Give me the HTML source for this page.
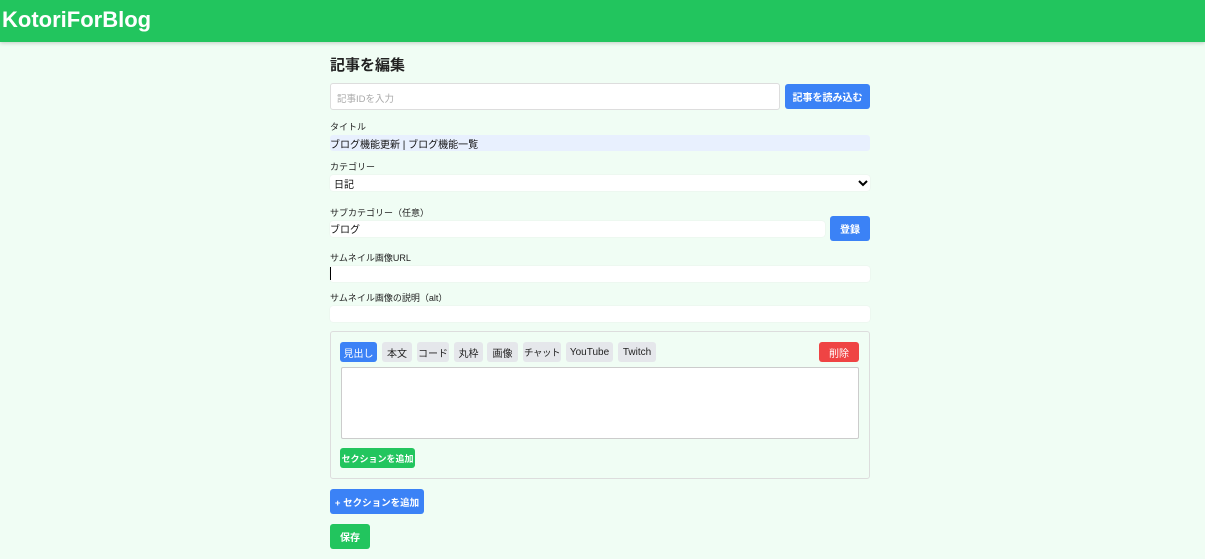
<!DOCTYPE html>
<html><head><meta charset="utf-8"><style>
*{box-sizing:border-box;margin:0;padding:0;white-space:nowrap}
body{width:1205px;height:559px;background:#f0fdf4;font-family:"Liberation Sans","Noto Sans CJK JP",sans-serif;position:relative;overflow:hidden;color:#111}
.a{position:absolute}
.hdr{left:0;top:0;width:1205px;height:42px;background:#22c55e;box-shadow:0 1px 4px rgba(0,0,0,.2)}
.hdr span{position:absolute;left:2px;top:7px;color:#fff;font-weight:bold;font-size:22px}
.lbl{font-size:9px;color:#222;left:330px}
.in{background:#fff;border-radius:3px;left:330px;width:540px;box-shadow:0 0 1px #ddd}
.btn{color:#fff;font-size:10px;font-weight:bold;border-radius:3px;display:flex;align-items:center;justify-content:center}
.tb{top:342px;height:20px;background:#e5e7eb;border-radius:3px;font-size:10px;display:flex;align-items:center;justify-content:center;color:#222}
</style></head><body>
<div class="a hdr"><span>KotoriForBlog</span></div>
<div class="a" style="left:330px;top:54px;font-size:15px;font-weight:bold;color:#222">記事を編集</div>
<div class="a" style="left:330px;top:83px;width:450px;height:27px;background:#fff;border:1px solid #ddd;border-radius:3px;font-size:9.5px;color:#aaa;padding:7px 0 0 6px">記事IDを入力</div>
<div class="a btn" style="left:785px;top:84px;width:85px;height:25px;background:#3b82f6">記事を読み込む</div>
<div class="a lbl" style="top:120px">タイトル</div>
<div class="a" style="left:330px;top:135px;width:540px;height:16px;background:#e8f0fe;border-radius:3px;font-size:10px;padding-top:1px">ブログ機能更新 | ブログ機能一覧</div>
<div class="a lbl" style="top:160px">カテゴリー</div>
<div class="a in" style="top:175px;height:16px;font-size:10px;padding:1px 0 0 4px">日記<svg style="position:absolute;right:2px;top:4px" width="10" height="8" viewBox="0 0 10 8"><path d="M1 2l4 4 4-4" stroke="#000" stroke-width="2" fill="none"/></svg></div>
<div class="a lbl" style="top:206px">サブカテゴリー（任意）</div>
<div class="a in" style="top:221px;width:495px;height:16px;font-size:10px;padding-top:0px">ブログ</div>
<div class="a btn" style="left:830px;top:216px;width:40px;height:25px;background:#3b82f6">登録</div>
<div class="a lbl" style="top:251px">サムネイル画像URL</div>
<div class="a in" style="top:266px;height:16px"><div style="position:absolute;left:0;top:1px;width:1px;height:13px;background:#000"></div></div>
<div class="a lbl" style="top:291px">サムネイル画像の説明（alt）</div>
<div class="a in" style="top:306px;height:16px"></div>
<div class="a" style="left:330px;top:331px;width:540px;height:148px;border:1px solid #ddd;border-radius:3px"></div>
<div class="a tb" style="left:340px;width:37px;background:#3b82f6;color:#fff">見出し</div>
<div class="a tb" style="left:382px;width:30px">本文</div>
<div class="a tb" style="left:417px;width:32px">コード</div>
<div class="a tb" style="left:454px;width:29px">丸枠</div>
<div class="a tb" style="left:487px;width:31px">画像</div>
<div class="a tb" style="left:523px;width:38px;font-size:9.5px;letter-spacing:-0.5px">チャット</div>
<div class="a tb" style="left:566px;width:47px">YouTube</div>
<div class="a tb" style="left:618px;width:38px">Twitch</div>
<div class="a tb" style="left:819px;width:40px;background:#ef4444;color:#fff">削除</div>
<div class="a" style="left:341px;top:367px;width:518px;height:72px;background:#fff;border:1px solid #ccc;border-radius:2px"></div>
<div class="a btn" style="left:340px;top:448px;width:75px;height:20px;background:#22c55e;font-size:9px">セクションを追加</div>
<div class="a btn" style="left:330px;top:489px;width:94px;height:25px;background:#3b82f6;font-size:9.5px">+ セクションを追加</div>
<div class="a btn" style="left:330px;top:524px;width:40px;height:25px;background:#22c55e">保存</div>
</body></html>
